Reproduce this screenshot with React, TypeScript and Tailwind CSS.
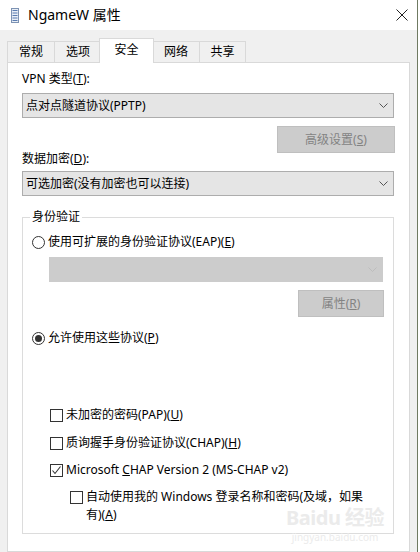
import React from "react";

const font = "font-['Noto_Sans','Noto_Sans_CJK_SC',sans-serif]";

function Chevron({ color = "#555" }: { color?: string }) {
  return (
    <svg width="9" height="5" viewBox="0 0 9 5" className="shrink-0">
      <polyline points="0.5,0.5 4.5,4.5 8.5,0.5" fill="none" stroke={color} strokeWidth="1" />
    </svg>
  );
}

function Select({ text, disabled }: { text?: string; disabled?: boolean }) {
  return (
    <div
      className={`flex items-center justify-between h-[25px] border pl-[3px] pr-[5px] ${
        disabled ? "bg-[#cccccc] border-[#cccccc]" : "bg-[#e5e5e5] border-[#adadad]"
      }`}
    >
      <span className="leading-[16px]">{text}</span>
      <Chevron color={disabled ? "#bdbdbd" : "#555"} />
    </div>
  );
}

function DisabledButton({ children, className }: { children: React.ReactNode; className: string }) {
  return (
    <div
      className={`flex items-center justify-center h-[27px] bg-[#cccccc] border border-[#bfbfbf] text-[#838383] leading-[16px] ${className}`}
    >
      {children}
    </div>
  );
}

function Radio({ checked }: { checked?: boolean }) {
  return (
    <span className="flex items-center justify-center w-[13px] h-[13px] rounded-full border border-[#333] bg-white shrink-0">
      {checked && <span className="w-[7px] h-[7px] rounded-full bg-[#333]" />}
    </span>
  );
}

function Check({ checked }: { checked?: boolean }) {
  return (
    <span className="flex items-center justify-center w-[13px] h-[13px] border border-[#333] bg-white shrink-0">
      {checked && (
        <svg width="11" height="11" viewBox="0 0 11 11">
          <polyline points="1.5,5.5 4,8.5 9.5,1.5" fill="none" stroke="#333" strokeWidth="1.1" />
        </svg>
      )}
    </span>
  );
}

const U = ({ children }: { children: React.ReactNode }) => <span className="underline">{children}</span>;

export default function App() {
  const tabs = ["常规", "选项", "安全", "网络", "共享"];
  return (
    <div className={`flex w-[420px] h-[552px] overflow-hidden bg-white text-[12px] text-black ${font}`}>
      <div className="flex flex-col w-[417px] h-full bg-[#f0f0f0]">
        {/* title bar */}
        <div className="flex items-center h-[30px] bg-white shrink-0">
          <svg width="8" height="15" viewBox="0 0 8 15" className="ml-[11px]">
            <rect x="0.5" y="0.5" width="7" height="14" fill="#e8eef6" stroke="#7d93b3" />
            <rect x="1.5" y="2" width="5" height="1" fill="#5a7bb0" />
            <rect x="1.5" y="4.5" width="5" height="1" fill="#5a7bb0" />
            <rect x="1.5" y="7" width="5" height="1" fill="#5a7bb0" />
            <rect x="1.5" y="9.5" width="5" height="1" fill="#5a7bb0" />
            <rect x="1.5" y="12" width="5" height="1" fill="#5a7bb0" />
          </svg>
          <span className="ml-[9px] text-[14px] leading-[18px]">NgameW 属性</span>
          <svg width="12" height="12" viewBox="0 0 12 12" className="ml-auto mr-[9px]">
            <path d="M0.5 0.5 L11.5 11.5 M11.5 0.5 L0.5 11.5" stroke="#222" strokeWidth="1" />
          </svg>
        </div>

        {/* tabs */}
        <div className="flex items-end h-[32px] pl-[7px] shrink-0">
          {tabs.map((t, i) => {
            const sel = i === 2;
            return (
              <div
                key={t}
                className={
                  sel
                    ? "relative z-10 -mx-[2px] mb-[-1px] w-[55px] h-[25px] bg-white border border-b-0 border-[#d9d9d9] flex items-center justify-center pb-[3px]"
                    : `w-[47px] h-[21px] border-l border-t border-[#d9d9d9] flex items-center justify-center ${
                        i === tabs.length - 1 ? "border-r" : ""
                      }`
                }
              >
                <span className="leading-[16px]">{t}</span>
              </div>
            );
          })}
        </div>

        {/* panel */}
        <div className="relative ml-[7px] w-[403px] flex-1 bg-white border border-[#d9d9d9] pl-[14px] pt-[8px]">
          <div className="w-[372px]">
            <div className="h-[16px] leading-[16px]">
              VPN 类型(<U>T</U>):
            </div>
            <div className="mt-[6px]">
              <Select text="点对点隧道协议(PPTP)" />
            </div>
            <DisabledButton className="mt-[8px] ml-[255px] w-[118px]">
              高级设置(<U>S</U>)
            </DisabledButton>
            <div className="h-[12px] leading-[12px]">
              数据加密(<U>D</U>):
            </div>
            <div className="mt-[6px]">
              <Select text="可选加密(没有加密也可以连接)" />
            </div>

            {/* group box */}
            <div className="relative mt-[21px] h-[317px] border border-[#dcdcdc]">
              <span className="absolute -top-[9px] left-[7px] bg-white px-[2px] leading-[16px]">身份验证</span>

              <div className="flex items-center gap-[3px] h-[16px] mt-[16px] ml-[9px]">
                <Radio />
                <span className="leading-[16px]">
                  使用可扩展的身份验证协议(EAP)(<U>E</U>)
                </span>
              </div>
              <div className="mt-[7px] ml-[26px] w-[334px]">
                <Select disabled />
              </div>
              <DisabledButton className="mt-[8px] ml-[275px] w-[86px]">
                属性(<U>R</U>)
              </DisabledButton>

              <div className="flex items-center gap-[3px] h-[16px] mt-[13px] ml-[9px]">
                <Radio checked />
                <span className="leading-[16px]">
                  允许使用这些协议(<U>P</U>)
                </span>
              </div>

              <div className="flex items-center gap-[3px] h-[16px] mt-[61px] ml-[27px]">
                <Check />
                <span className="leading-[16px]">
                  未加密的密码(PAP)(<U>U</U>)
                </span>
              </div>
              <div className="flex items-center gap-[3px] h-[16px] mt-[12px] ml-[27px]">
                <Check />
                <span className="leading-[16px]">
                  质询握手身份验证协议(CHAP)(<U>H</U>)
                </span>
              </div>
              <div className="flex items-center gap-[3px] h-[16px] mt-[11px] ml-[27px]">
                <Check checked />
                <span className="leading-[16px]">
                  Microsoft <U>C</U>HAP Version 2 (MS-CHAP v2)
                </span>
              </div>
              <div className="flex items-start gap-[3px] mt-[10px] ml-[47px]">
                <span className="mt-[3px]">
                  <Check />
                </span>
                <span className="leading-[18px]">
                  自动使用我的 Windows 登录名称和密码(及域，如果
                  <br />
                  有)(<U>A</U>)
                </span>
              </div>
            </div>
          </div>

          {/* watermark */}
          <div className="absolute left-[278px] top-[444px] flex flex-col items-center gap-[2px] text-[#ebebeb] pointer-events-none">
            <span className="text-[20px] leading-[22px] font-bold tracking-tight">Baidu 经验</span>
            <span className="text-[10px] leading-[12px]">jingyan.baidu.com</span>
          </div>
        </div>
      </div>
      <div className="w-[1px] h-full bg-[#6f7a62]" />
      <div className="w-[2px] h-full bg-white" />
    </div>
  );
}
